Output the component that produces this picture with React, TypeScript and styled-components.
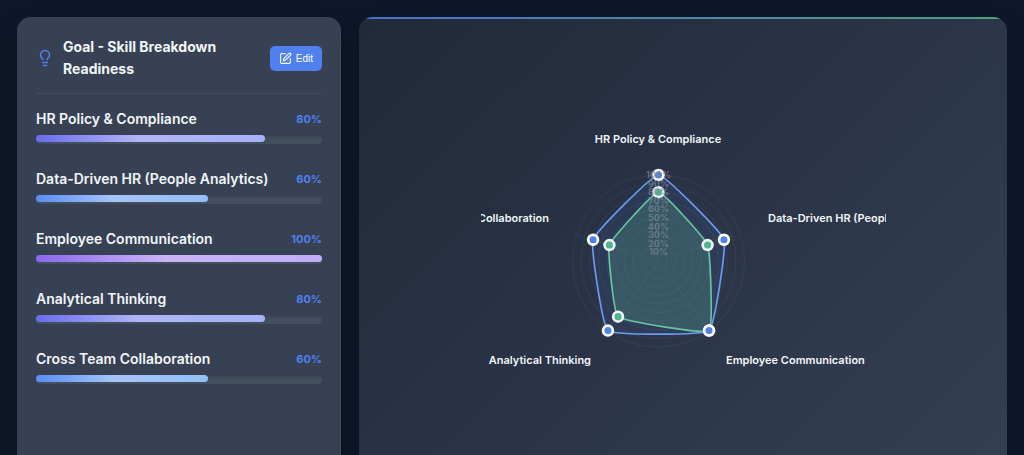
import React from 'react';
import styled, { createGlobalStyle } from 'styled-components';
import { Lightbulb, SquarePen } from 'lucide-react';

const GlobalStyle = createGlobalStyle`
  *, *::before, *::after { box-sizing: border-box; }
  html { scrollbar-width: none; background: #0f172a; }
  body {
    margin: 0;
    color: #f1f5f9;
    font-family: Inter, "Liberation Sans", sans-serif;
    -webkit-font-smoothing: antialiased;
  }
`;

const Page = styled.main`
  display: grid;
  grid-template-columns: minmax(0, 1fr) minmax(0, 2fr);
  gap: 18px;
  padding: 17px;
  background: #10172a;
`;

const Panel = styled.section`
  border-radius: 14px;
  box-shadow: 0 8px 24px rgba(0, 0, 0, 0.2);
`;

const SkillsPanel = styled(Panel)`
  padding: 19px 18px 19px 19px;
  background: #374153;
  border-right: 1px solid #3f4a5b;
`;

const ChartPanel = styled(Panel)`
  position: relative;
  display: flex;
  align-items: center;
  justify-content: center;
  padding: 30px 19px;
  overflow: hidden;
  background: linear-gradient(135deg, #202a39, #2b3447 50%, #334052);

  &::before {
    content: '';
    position: absolute;
    inset: 0 0 auto;
    height: 2px;
    background: linear-gradient(90deg, #4670cc, #4aa07f);
  }
`;

const Header = styled.header`
  display: flex;
  align-items: center;
  gap: 9px;
  padding-bottom: 13px;
  margin-bottom: 16px;
  border-bottom: 1px solid #424d5e;

  > svg { flex: none; color: #4f80ee; }
`;

const Title = styled.h2`
  flex: 1;
  margin: 0;
  font-size: 14px;
  line-height: 22px;
  font-weight: 700;
`;

const EditButton = styled.button`
  display: flex;
  align-items: center;
  gap: 4px;
  height: 25px;
  padding: 0 9px;
  border: 0;
  border-radius: 5px;
  background: #4f80ee;
  color: #fff;
  font: 500 10px "Liberation Sans", sans-serif;
  cursor: pointer;
`;

const SkillList = styled.ul`
  display: grid;
  gap: 26px;
  margin: 0;
  padding: 0;
  list-style: none;
`;

const SkillHead = styled.div`
  display: flex;
  justify-content: space-between;
  align-items: center;
  margin-bottom: 7px;
  line-height: 18px;
`;

const SkillName = styled.span`
  font-size: 14px;
  font-weight: 600;
`;

const SkillValue = styled.span`
  font-size: 11px;
  font-weight: 700;
  color: #4f80ee;
`;

const Bar = styled.div`
  display: grid;
  height: 9px;
  > * { grid-area: 1 / 1; }
`;

const Track = styled.div`
  align-self: end;
  height: 8px;
  border-radius: 4px;
  background: linear-gradient(#3b4657, #434e5e 50%);
`;

const Fill = styled.div<{ $tone: Tone }>`
  height: 7px;
  border-radius: 4px;
  background: linear-gradient(90deg, ${({ $tone }) => tones[$tone]});
`;

const Radar = styled.svg`
  display: block;
  width: 100%;
  max-width: 405px;
  height: auto;
`;

const AxisLabel = styled.text`
  font-size: 11px;
  font-weight: 600;
  fill: #f1f5f9;
`;

const TickLabel = styled.text`
  font-size: 9px;
  font-weight: 700;
  fill: rgba(125, 135, 155, 0.72);
  text-anchor: middle;
`;

type Tone = 'indigo' | 'blue' | 'violet';

const tones: Record<Tone, string> = {
  indigo: '#6b6bee 0%, #b0b5f6 45%, #a5b1f8 100%',
  blue: '#5a8df2 0%, #a4c4f8 45%, #94bdf8 100%',
  violet: '#8b67ee 0%, #c6b4f6 45%, #bfaef8 100%',
};

const skills: { name: string; value: number; tone: Tone }[] = [
  { name: 'HR Policy & Compliance', value: 80, tone: 'indigo' },
  { name: 'Data-Driven HR (People Analytics)', value: 60, tone: 'blue' },
  { name: 'Employee Communication', value: 100, tone: 'violet' },
  { name: 'Analytical Thinking', value: 80, tone: 'indigo' },
  { name: 'Cross Team Collaboration', value: 60, tone: 'blue' },
];

const CX = 177.5;
const CY = 214;
const R = 86;

type Point = { x: number; y: number };

const pointAt = (value: number, index: number): Point => {
  const angle = ((index * 72 - 90) * Math.PI) / 180;
  const r = (R * value) / 100;
  return { x: CX + r * Math.cos(angle), y: CY + r * Math.sin(angle) };
};

// Closed spline through the points, with control points weighted by segment length.
const smoothPath = (points: Point[], tension = 0.1) => {
  const n = points.length;
  const controls = points.map((cur, i) => {
    const prev = points[(i + n - 1) % n];
    const next = points[(i + 1) % n];
    const before = Math.hypot(cur.x - prev.x, cur.y - prev.y);
    const after = Math.hypot(next.x - cur.x, next.y - cur.y);
    const a = (tension * before) / (before + after);
    const b = (tension * after) / (before + after);
    const dx = next.x - prev.x;
    const dy = next.y - prev.y;
    return {
      inX: cur.x - a * dx,
      inY: cur.y - a * dy,
      outX: cur.x + b * dx,
      outY: cur.y + b * dy,
    };
  });
  const segments = points.map((_, i) => {
    const j = (i + 1) % n;
    const c = controls[i];
    const d = controls[j];
    return `C${c.outX},${c.outY} ${d.inX},${d.inY} ${points[j].x},${points[j].y}`;
  });
  return `M${points[0].x},${points[0].y}${segments.join('')}Z`;
};

const series = [
  { values: [80, 60, 100, 80, 60], line: '#6acb98', dot: '#52bb80', fill: 'rgba(88, 178, 132, 0.25)' },
  { values: [100, 80, 100, 100, 80], line: '#6b9bf0', dot: '#4f80ee', fill: 'rgba(79, 128, 238, 0.1)' },
];

const axisLabels: { text: string; x: number; y: number; anchor: 'start' | 'middle' | 'end' }[] = [
  { text: 'HR Policy & Compliance', x: 177, y: 96, anchor: 'middle' },
  { text: 'Data-Driven HR (People Analytics)', x: 287, y: 175, anchor: 'start' },
  { text: 'Employee Communication', x: 245, y: 317, anchor: 'start' },
  { text: 'Analytical Thinking', x: 110, y: 317, anchor: 'end' },
  { text: 'Cross Team Collaboration', x: 68, y: 175, anchor: 'end' },
];

const steps = [10, 20, 30, 40, 50, 60, 70, 80, 90, 100];

function RadarChart() {
  return (
    <Radar viewBox="0 0 405 405" role="img" aria-label="Skill readiness radar chart">
      <g fill="none" stroke="rgba(148, 163, 184, 0.09)">
        {steps.map((s) => (
          <circle key={s} cx={CX} cy={CY} r={(R * s) / 100} />
        ))}
        {axisLabels.map((label, i) => {
          const p = pointAt(100, i);
          return <line key={label.text} x1={CX} y1={CY} x2={p.x} y2={p.y} />;
        })}
      </g>
      {series.map((s) => {
        const points = s.values.map(pointAt);
        return (
          <g key={s.line}>
            <path d={smoothPath(points)} fill={s.fill} stroke={s.line} strokeWidth="1.7" />
            {points.map((p, i) => (
              <circle key={i} cx={p.x} cy={p.y} r="4.9" fill={s.dot} stroke="#fff" strokeWidth="2.7" />
            ))}
          </g>
        );
      })}
      {steps.map((s) => (
        <TickLabel key={s} x={CX} y={CY - (R * s) / 100 + 3}>
          {s}%
        </TickLabel>
      ))}
      {axisLabels.map((label) => (
        <AxisLabel key={label.text} x={label.x} y={label.y} textAnchor={label.anchor}>
          {label.text}
        </AxisLabel>
      ))}
    </Radar>
  );
}

export default function App() {
  return (
    <>
      <GlobalStyle />
      <Page>
        <SkillsPanel>
          <Header>
            <Lightbulb size={18} aria-hidden />
            <Title>Goal - Skill Breakdown Readiness</Title>
            <EditButton type="button">
              <SquarePen size={13} aria-hidden />
              Edit
            </EditButton>
          </Header>
          <SkillList>
            {skills.map((skill) => (
              <li key={skill.name}>
                <SkillHead>
                  <SkillName>{skill.name}</SkillName>
                  <SkillValue>{skill.value}%</SkillValue>
                </SkillHead>
                <Bar
                  role="progressbar"
                  aria-label={skill.name}
                  aria-valuenow={skill.value}
                  aria-valuemin={0}
                  aria-valuemax={100}
                >
                  <Track />
                  <Fill $tone={skill.tone} style={{ width: `${skill.value}%` }} />
                </Bar>
              </li>
            ))}
          </SkillList>
        </SkillsPanel>
        <ChartPanel>
          <RadarChart />
        </ChartPanel>
      </Page>
    </>
  );
}
